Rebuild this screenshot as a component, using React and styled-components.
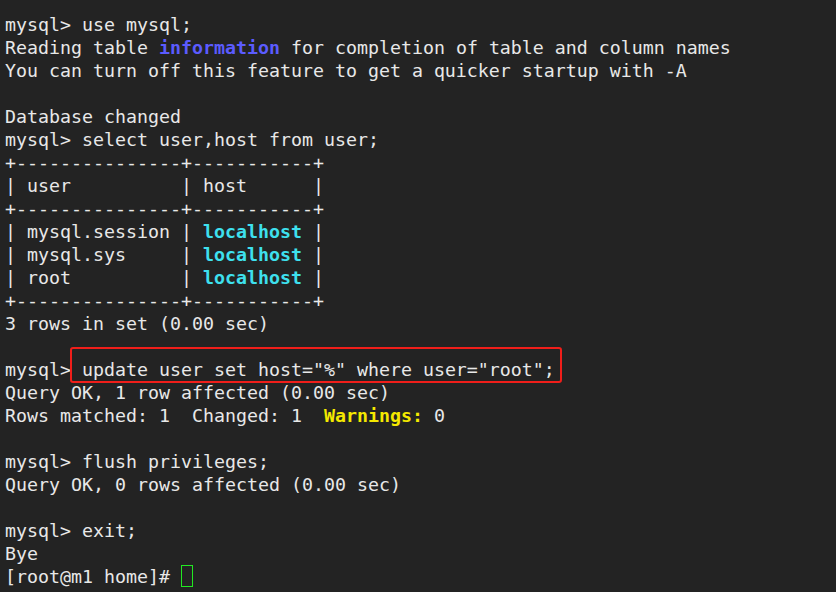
import React from 'react';
import styled, { createGlobalStyle } from 'styled-components';

const GlobalStyle = createGlobalStyle`
  html, body {
    margin: 0;
    padding: 0;
    background: #232323;
  }
`;

const Terminal = styled.div`
  box-sizing: border-box;
  width: 836px;
  height: 592px;
  overflow: hidden;
  padding: 13px 0 0 5px;
  background: #232323;
  color: #e8e8e8;
  font-family: 'DejaVu Sans Mono', 'Liberation Mono', monospace;
  font-size: 18.28px;
  line-height: 23px;
`;

const Line = styled.div`
  height: 23px;
  white-space: pre;
`;

const Hl = styled.span`
  color: ${(p) => p.color};
  font-weight: bold;
`;

const Marked = styled.span`
  position: relative;

  &::after {
    content: '';
    position: absolute;
    top: -12px;
    bottom: -3px;
    left: -1px;
    right: -7px;
    border: 2.5px solid #f01e1a;
    border-radius: 3px;
  }
`;

const Cursor = styled.span`
  display: inline-block;
  box-sizing: border-box;
  width: 12px;
  height: 22px;
  vertical-align: top;
  border: 1.5px solid #22e822;
`;

const BLUE = '#5b5bff';
const CYAN = '#3ee0ee';
const YELLOW = '#f4e800';

const tableBorder = '+---------------+-----------+';

const App = () => {
  return (
    <>
      <GlobalStyle />
      <Terminal>
        <Line>mysql&gt; use mysql;</Line>
        <Line>
          Reading table <Hl color={BLUE}>information</Hl> for completion of table and column names
        </Line>
        <Line>You can turn off this feature to get a quicker startup with -A</Line>
        <Line />
        <Line>Database changed</Line>
        <Line>mysql&gt; select user,host from user;</Line>
        <Line>{tableBorder}</Line>
        <Line>| user          | host      |</Line>
        <Line>{tableBorder}</Line>
        {['mysql.session', 'mysql.sys', 'root'].map((u) => (
          <Line key={u}>
            {'| ' + u.padEnd(14) + '| '}
            <Hl color={CYAN}>localhost</Hl>
            {' |'}
          </Line>
        ))}
        <Line>{tableBorder}</Line>
        <Line>3 rows in set (0.00 sec)</Line>
        <Line />
        <Line>
          mysql&gt;<Marked> update user set host="%" where user="root";</Marked>
        </Line>
        <Line>Query OK, 1 row affected (0.00 sec)</Line>
        <Line>
          Rows matched: 1  Changed: 1  <Hl color={YELLOW}>Warnings:</Hl> 0
        </Line>
        <Line />
        <Line>mysql&gt; flush privileges;</Line>
        <Line>Query OK, 0 rows affected (0.00 sec)</Line>
        <Line />
        <Line>mysql&gt; exit;</Line>
        <Line>Bye</Line>
        <Line>
          [root@m1 home]# <Cursor />
        </Line>
      </Terminal>
    </>
  );
};

export default App;
